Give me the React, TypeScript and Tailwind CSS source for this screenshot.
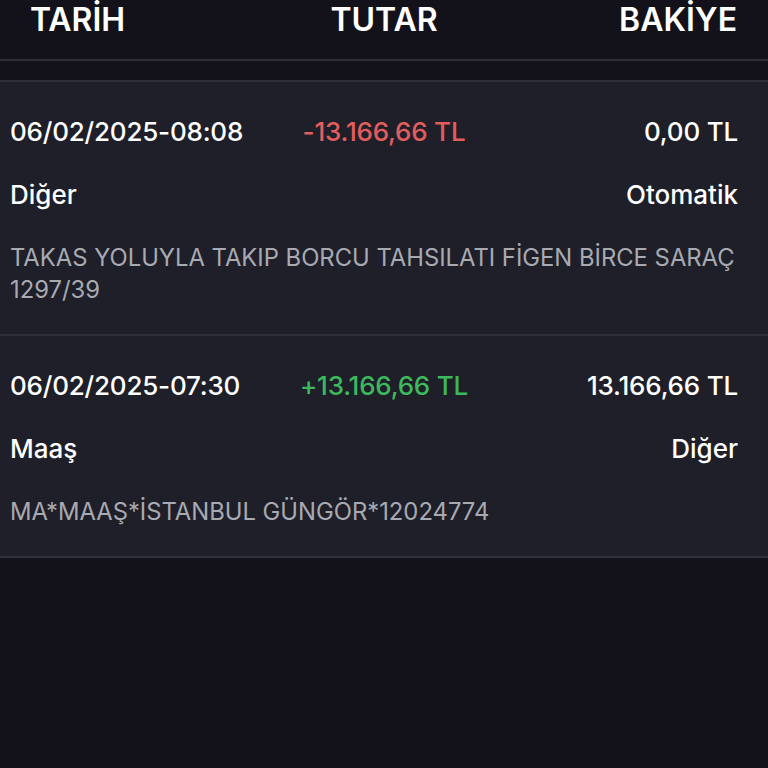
import React from 'react';

interface Txn {
  date: string;
  amount: string;
  positive: boolean;
  balance: string;
  category: string;
  channel: string;
  desc: string;
}

const txns: Txn[] = [
  {
    date: '06/02/2025-08:08',
    amount: '-13.166,66 TL',
    positive: false,
    balance: '0,00 TL',
    category: 'Diğer',
    channel: 'Otomatik',
    desc: 'TAKAS YOLUYLA TAKIP BORCU TAHSILATI FİGEN BİRCE SARAÇ 1297/39',
  },
  {
    date: '06/02/2025-07:30',
    amount: '+13.166,66 TL',
    positive: true,
    balance: '13.166,66 TL',
    category: 'Maaş',
    channel: 'Diğer',
    desc: 'MA*MAAŞ*İSTANBUL GÜNGÖR*12024774',
  },
];

function TxnCard({ t }: { t: Txn }) {
  return (
    <div className="bg-[#1e1f29] border-b-2 border-[#2f3039] px-[10px] pt-[30px] pb-[28px]">
      {/* date / amount / balance */}
      <div className="grid grid-cols-3 items-center h-[32px] text-[26px] font-medium text-white tracking-[-0.2px]">
        <span className="whitespace-nowrap">{t.date}</span>
        <span
          className={`text-center whitespace-nowrap ${t.positive ? 'text-[#3db85c]' : 'text-[#e35d5d]'}`}
        >
          {t.amount}
        </span>
        <span className="text-right whitespace-nowrap pr-[20px]">{t.balance}</span>
      </div>
      <div className="flex justify-between items-center h-[32px] mt-[34px] pr-[20px] text-[26px] font-medium text-white">
        <span>{t.category}</span>
        <span>{t.channel}</span>
      </div>
      <div className="mt-[32px] pr-[18px] text-[23.8px] leading-[32px] text-[#a8aab2]">{t.desc}</div>
    </div>
  );
}

export default function App() {
  return (
    <div className="w-[768px] h-[768px] bg-[#13121a] overflow-hidden" style={{ fontFamily: 'Inter, "Noto Sans", sans-serif' }}>
      <div className="h-[61px] grid grid-cols-3 items-start text-[32px] leading-[40px] font-semibold text-white border-b-2 border-[#2e2d37]">
        <span className="pl-[30px]">TARİH</span>
        <span className="text-center">TUTAR</span>
        <span className="text-right pr-[31px]">BAKİYE</span>
      </div>
      <div className="h-[21px] border-b-2 border-[#2f3039]" />
      {txns.map((t) => (
        <TxnCard key={t.date} t={t} />
      ))}
    </div>
  );
}
